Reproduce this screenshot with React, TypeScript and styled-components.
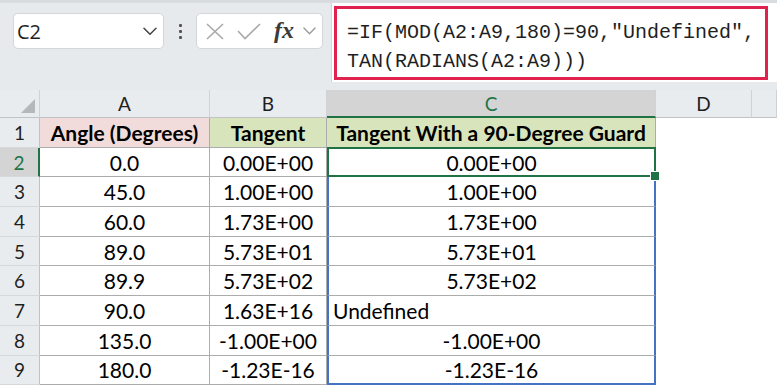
import React from "react";
import styled, { createGlobalStyle, css } from "styled-components";

const Global = createGlobalStyle`
  html, body { margin: 0; padding: 0; background: #ffffff; }
  body { width: 777px; height: 388px; overflow: hidden; font-family: "Lato", "Open Sans", sans-serif; }
`;

const Page = styled.div`
  width: 777px;
  height: 388px;
  display: flex;
  flex-direction: column;
  background: #ffffff;
`;

const Toolbar = styled.div`
  height: 90px;
  box-sizing: border-box;
  background: #e6eaec;
  border-top: 3px solid #d9dcde;
  display: flex;
  align-items: flex-start;
`;

const LeftTools = styled.div`
  display: flex;
  align-items: center;
  padding: 10px 0 0 13px;
`;

const NameBox = styled.div`
  width: 151px;
  height: 36px;
  box-sizing: border-box;
  background: #ffffff;
  border: 1px solid #d3d7da;
  border-radius: 5px;
  display: flex;
  align-items: center;
  justify-content: space-between;
  padding: 0 6px 0 3px;
  font-family: "Open Sans", "Liberation Sans", sans-serif;
  font-size: 20px;
  color: #1f1f1f;
`;

const Kebab = styled.div`
  width: 32px;
  display: flex;
  flex-direction: column;
  align-items: center;
  gap: 3px;
`;

const Dot = styled.span`
  width: 3px;
  height: 3px;
  background: #555;
  border-radius: 1px;
`;

const FxGroup = styled.div`
  width: 127px;
  height: 36px;
  box-sizing: border-box;
  background: #ffffff;
  border: 1px solid #d3d7da;
  border-radius: 5px;
  display: flex;
  align-items: center;
  padding: 0 4px 0 9px;
  gap: 13px;
`;

const FxText = styled.span`
  font-family: "Liberation Serif", "DejaVu Serif", serif;
  font-style: italic;
  font-weight: 700;
  font-size: 24px;
  line-height: 1;
  color: #3a3a3a;
  margin-top: -2px;
  margin-right: -4px;
`;

const FormulaBar = styled.div`
  flex: 1;
  margin-left: 8px;
  height: 79px;
  box-sizing: border-box;
  background: #ffffff;
  border-left: 1px solid #d3d7da;
  padding: 3px 9px 0 2px;
`;

const FormulaHighlight = styled.div`
  box-sizing: border-box;
  height: 74px;
  border: 3px solid #e0234e;
  padding: 9px 0 0 10px;
  font-family: "Liberation Mono", "DejaVu Sans Mono", monospace;
  font-size: 20px;
  line-height: 29px;
  color: #1f1f1f;
  white-space: pre;
`;

const Sheet = styled.div`
  display: grid;
  grid-template-columns: 40px 170px 117px 329px 96px 1fr;
  grid-template-rows: 28px repeat(9, 29.7px);
`;

const HeadCell = styled.div<{ $sel?: boolean }>`
  background: #e9ecee;
  border-right: 1px solid #cfd3d5;
  border-bottom: 1px solid #bfc3c5;
  display: flex;
  align-items: center;
  justify-content: center;
  font-family: "Lato", sans-serif;
  font-size: 19px;
  color: #1f1f1f;
  position: relative;
  box-sizing: border-box;
  ${(p) =>
    p.$sel &&
    css`
      background: #d4d4d4;
      color: #217346;
      border-bottom: 2px solid #217346;
    `}
`;

const Corner = styled.svg`
  position: absolute;
  right: 4px;
  bottom: 4px;
`;

const RowHead = styled.div<{ $sel?: boolean }>`
  background: #e9ecee;
  border-right: 1px solid #bfc3c5;
  border-bottom: 1px solid #d6d9db;
  display: flex;
  align-items: center;
  justify-content: center;
  font-family: "Lato", sans-serif;
  font-size: 19px;
  color: #1f1f1f;
  box-sizing: border-box;
  ${(p) =>
    p.$sel &&
    css`
      background: #d4d4d4;
      color: #217346;
      border-right: 2px solid #217346;
    `}
`;

const Cell = styled.div<{
  $bg?: string;
  $bold?: boolean;
  $left?: boolean;
  $blue?: boolean;
  $blueBottom?: boolean;
  $plain?: boolean;
}>`
  position: relative;
  box-sizing: border-box;
  background: ${(p) => p.$bg || "#ffffff"};
  border-right: 1px solid ${(p) => (p.$plain ? "transparent" : "#acacac")};
  border-bottom: 1px solid ${(p) => (p.$plain ? "transparent" : "#acacac")};
  display: flex;
  align-items: center;
  justify-content: ${(p) => (p.$left ? "flex-start" : "center")};
  padding-left: ${(p) => (p.$left ? "4px" : "0")};
  font-family: "Lato", sans-serif;
  font-size: 21px;
  font-weight: ${(p) => (p.$bold ? 700 : 400)};
  color: #000;
  white-space: nowrap;
  ${(p) =>
    p.$blue &&
    css`
      border-left: 2px solid #4472c4;
      border-right: 2px solid #4472c4;
    `}
  ${(p) =>
    p.$blueBottom &&
    css`
      border-bottom: 2px solid #4472c4;
    `}
`;

const SelectBox = styled.div`
  position: absolute;
  z-index: 2;
  left: -2px;
  top: -1px;
  right: -2px;
  bottom: -1px;
  border: 2px solid #217346;
  pointer-events: none;
`;

const FillHandle = styled.div`
  position: absolute;
  right: -6px;
  bottom: -6px;
  width: 8px;
  height: 8px;
  background: #217346;
  border: 1px solid #ffffff;
`;

const rows: [string, string, string][] = [
  ["0.0", "0.00E+00", "0.00E+00"],
  ["45.0", "1.00E+00", "1.00E+00"],
  ["60.0", "1.73E+00", "1.73E+00"],
  ["89.0", "5.73E+01", "5.73E+01"],
  ["89.9", "5.73E+02", "5.73E+02"],
  ["90.0", "1.63E+16", "Undefined"],
  ["135.0", "-1.00E+00", "-1.00E+00"],
  ["180.0", "-1.23E-16", "-1.23E-16"],
];

const Chevron = ({ color = "#444", w = 14 }: { color?: string; w?: number }) => (
  <svg width={w} height={w * 0.6} viewBox="0 0 14 8" fill="none">
    <path d="M1 1 L7 7 L13 1" stroke={color} strokeWidth="1.5" strokeLinecap="round" strokeLinejoin="round" />
  </svg>
);

export default function App() {
  return (
    <Page>
      <Global />
      <Toolbar>
        <LeftTools>
          <NameBox>
            <span>C2</span>
            <Chevron />
          </NameBox>
          <Kebab>
            <Dot />
            <Dot />
            <Dot />
          </Kebab>
          <FxGroup>
            <svg width="18" height="17" viewBox="0 0 18 17" fill="none">
              <path d="M1 1 L17 16 M17 1 L1 16" stroke="#a9a9a9" strokeWidth="1.6" />
            </svg>
            <svg width="24" height="17" viewBox="0 0 24 17" fill="none">
              <path d="M1 8 L8 15.5 L23 1" stroke="#a9a9a9" strokeWidth="1.6" />
            </svg>
            <FxText>fx</FxText>
            <Chevron color="#9a9a9a" w={13} />
          </FxGroup>
        </LeftTools>
        <FormulaBar>
          <FormulaHighlight>{'=IF(MOD(A2:A9,180)=90,"Undefined",\nTAN(RADIANS(A2:A9)))'}</FormulaHighlight>
        </FormulaBar>
      </Toolbar>
      <Sheet>
        <HeadCell>
          <Corner width="14" height="14" viewBox="0 0 14 14">
            <path d="M14 0 L14 14 L0 14 Z" fill="#b5b8ba" />
          </Corner>
        </HeadCell>
        <HeadCell>A</HeadCell>
        <HeadCell>B</HeadCell>
        <HeadCell $sel>C</HeadCell>
        <HeadCell>D</HeadCell>
        <HeadCell />

        <RowHead>1</RowHead>
        <Cell $bg="#f2dcdb" $bold>Angle (Degrees)</Cell>
        <Cell $bg="#d8e4bc" $bold>Tangent</Cell>
        <Cell $bg="#d8e4bc" $bold>Tangent With a 90-Degree Guard</Cell>
        <Cell $plain />
        <Cell $plain />

        {rows.map((r, i) => {
          const n = i + 2;
          const last = i === rows.length - 1;
          return (
            <React.Fragment key={n}>
              <RowHead $sel={n === 2}>{n}</RowHead>
              <Cell>{r[0]}</Cell>
              <Cell>{r[1]}</Cell>
              <Cell $blue $blueBottom={last} $left={r[2] === "Undefined"}>
                {r[2]}
                {n === 2 && (
                  <SelectBox>
                    <FillHandle />
                  </SelectBox>
                )}
              </Cell>
              <Cell $plain />
              <Cell $plain />
            </React.Fragment>
          );
        })}
      </Sheet>
    </Page>
  );
}
